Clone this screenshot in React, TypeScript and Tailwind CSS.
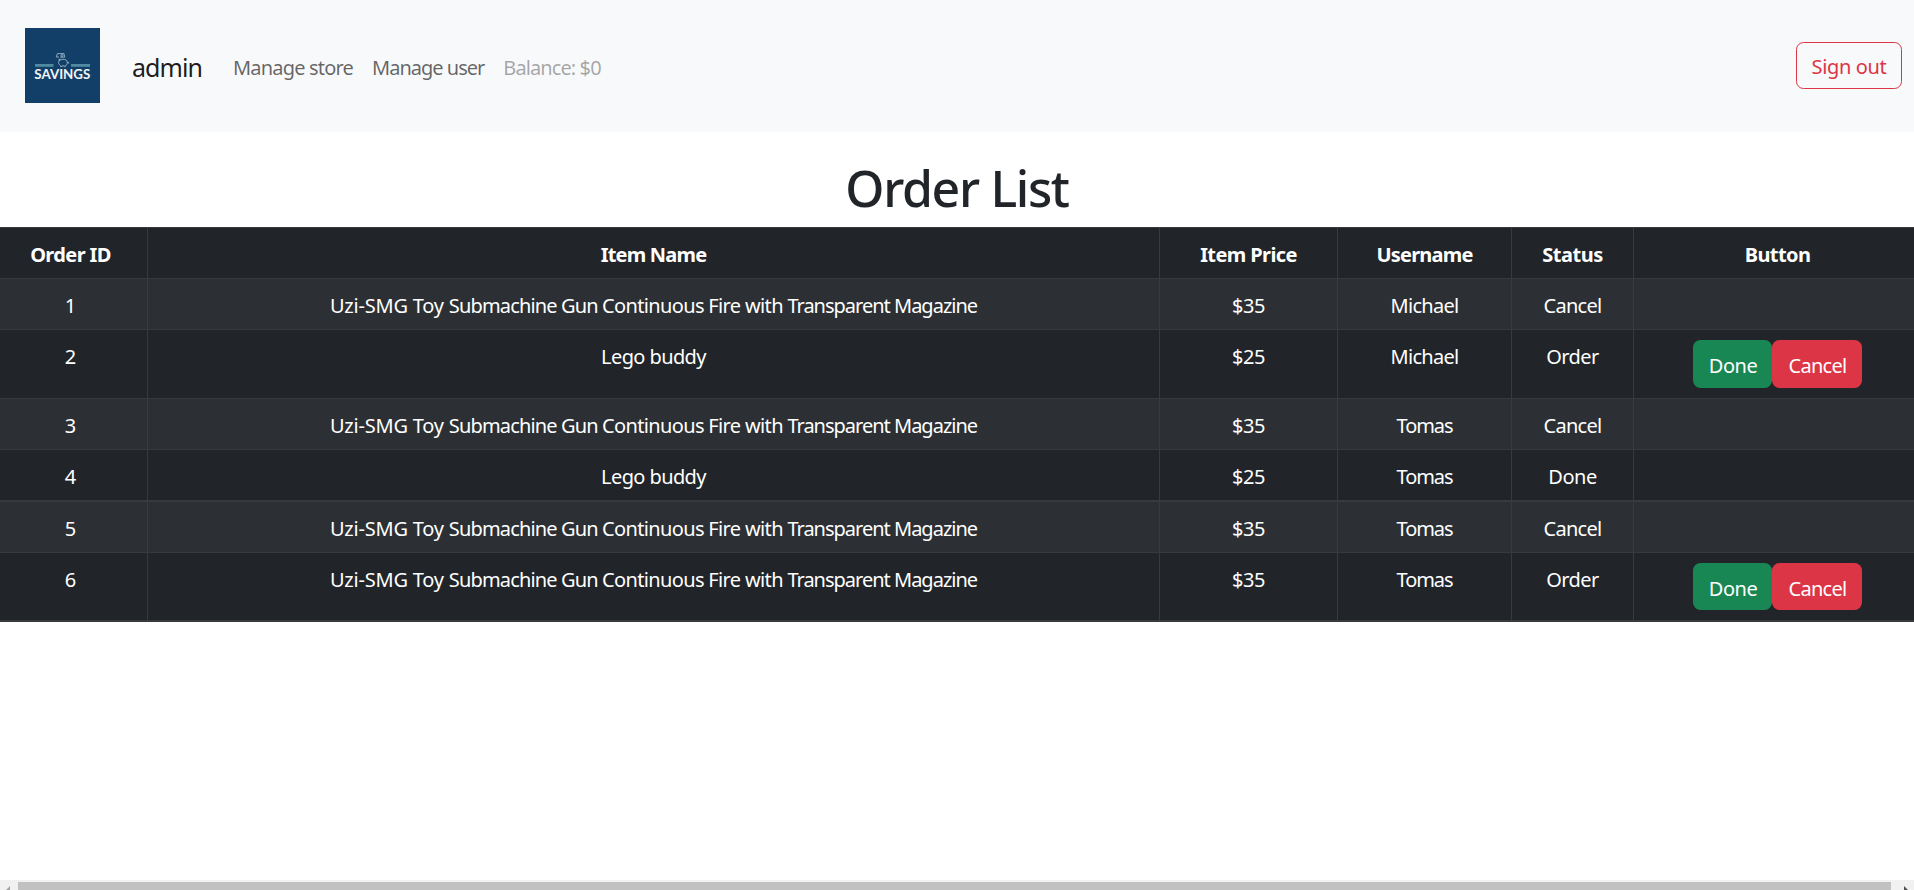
type Order = { id: number; item: string; price: string; user: string; status: string; height: string; action?: string };

const UZI = "Uzi-SMG Toy Submachine Gun Continuous Fire with Transparent Magazine";

const orders: Order[] = [
  { id: 1, item: UZI, price: "$35", user: "Michael", status: "Cancel", height: "h-[51px] border-b" },
  { id: 2, item: "Lego buddy", price: "$25", user: "Michael", status: "Order", height: "h-[69px] border-b", action: "h-12 pt-[3px]" },
  { id: 3, item: UZI, price: "$35", user: "Tomas", status: "Cancel", height: "h-[51px] border-b" },
  { id: 4, item: "Lego buddy", price: "$25", user: "Tomas", status: "Done", height: "h-[52px] border-b-2" },
  { id: 5, item: UZI, price: "$35", user: "Tomas", status: "Cancel", height: "h-[51px] border-b" },
  { id: 6, item: UZI, price: "$35", user: "Tomas", status: "Order", height: "h-[69px] border-b-2", action: "h-[47px] pt-1" },
];

const headers: [string, string][] = [
  ["Order ID", "tracking-[-0.6px]"],
  ["Item Name", "tracking-[-0.8px]"],
  ["Item Price", "tracking-[-0.6px]"],
  ["Username", "tracking-[-0.8px]"],
  ["Status", "tracking-[-0.5px]"],
  ["Button", "tracking-[-0.6px]"],
];

const tracking: Record<string, string> = {
  "Lego buddy": "tracking-[-0.6px]",
  Michael: "tracking-[-0.7px]",
  Tomas: "tracking-[-1.1px]",
  Cancel: "tracking-[-0.75px]",
  Order: "tracking-[-0.6px]",
  Done: "tracking-[-0.5px]",
  $35: "tracking-[-0.4px]",
  $25: "tracking-[-0.4px]",
};

const row =
  "grid grid-cols-[154px_1012px_178px_174px_122px_287px] divide-x divide-[#373b3e] border-[#373b3e] text-center text-white";

function Cell({ text }: { text: string }) {
  if (text === UZI) {
    return (
      <div className="pt-3">
        <span className="tracking-[-0.2px]">Uzi-SMG Toy </span>
        <span className="tracking-[-0.85px]">Submachine Gun </span>
        <span className="tracking-[-0.65px]">Continuous Fire with </span>
        <span className="tracking-[-1px]">Transparent Magazine</span>
      </div>
    );
  }
  return <div className={`pt-3 ${tracking[text] ?? ""}`}>{text}</div>;
}

function Logo() {
  return (
    <svg width="75" height="75" viewBox="0 0 75 75" className="shrink-0">
      <rect width="75" height="75" fill="#123f67" />
      <rect x="10" y="36" width="18.5" height="2.8" fill="#4f8aa0" />
      <rect x="46" y="36" width="19" height="2.8" fill="#4f8aa0" />
      <g fill="none" stroke="#a9c3d1" strokeWidth="0.8">
        <path d="M32.5 25.6H39l.7 3.6h-4.5M34 29H31.2l1.3-3.4" />
        <circle cx="37" cy="27.5" r="1" />
        <path d="M35.5 37.6c-1.3-1-1.9-2-1.9-3.1 0-2.2 2-3.2 4.4-3.2s4.3 1 4.3 3.2c0 1.3-.6 2.3-1.6 3v.9h-1.4v-.6h-2.2v.6h-1.6z" />
        <path d="M42.3 34.4h1.4v1.2M35.3 31.8l-1.2-.9v1.9" />
      </g>
      <text
        x="37.3"
        y="51"
        textAnchor="middle"
        textLength="56"
        lengthAdjust="spacingAndGlyphs"
        fill="#f2f6f8"
        className="font-['Lato'] text-[14px] font-bold"
      >
        SAVINGS
      </text>
    </svg>
  );
}

export default function App() {
  return (
    <div className="flex h-[890px] flex-col overflow-hidden bg-white font-['Noto_Sans',sans-serif] text-xl leading-[30px] text-[#212529]">
      <nav className="flex h-[132px] shrink-0 items-center bg-[#f8f9fa] pr-3 pb-px pl-[25px]">
        <Logo />
        <span className="ml-8 pt-[2px] text-[25px] tracking-[-0.95px] text-black/90">admin</span>
        <a className="ml-[31px] pt-1 tracking-[-0.8px] text-black/60">Manage store</a>
        <a className="ml-[19px] pt-1 tracking-[-1px] text-black/60">Manage user</a>
        <a className="ml-[19px] pt-1 tracking-[-0.9px] text-black/35">Balance: $0</a>
        <button className="ml-auto h-[47px] w-[106px] rounded-[7.5px] border border-[#dc3545] pt-[3px] tracking-[-0.35px] text-[#dc3545]">
          Sign out
        </button>
      </nav>

      <h1 className="mt-[26px] h-[69px] shrink-0 text-center text-[50px] leading-[60px] font-medium tracking-[-1.35px]">
        Order List
      </h1>

      <div className="ml-[-6px] w-[1927px]">
        <div className={`${row} h-[52px] border-y bg-[#212529] font-bold`}>
          {headers.map(([label, cls]) => (
            <div key={label} className={`pt-3 ${cls}`}>
              {label}
            </div>
          ))}
        </div>
        {orders.map((o) => (
          <div key={o.id} className={`${row} ${o.height} ${o.id % 2 ? "bg-[#2c3034]" : "bg-[#212529]"}`}>
            <Cell text={String(o.id)} />
            <Cell text={o.item} />
            <Cell text={o.price} />
            <Cell text={o.user} />
            <Cell text={o.status} />
            <div className="flex items-start justify-center pt-2.5">
              {o.action && (
                <>
                  <button className={`${o.action} w-[79px] rounded-[7.5px] bg-[#198754] pl-px tracking-[-0.5px]`}>Done</button>
                  <button className={`${o.action} w-[90px] rounded-[7.5px] bg-[#dc3545] pl-px tracking-[-0.75px]`}>Cancel</button>
                </>
              )}
            </div>
          </div>
        ))}
      </div>

      <div className="mt-auto flex h-2.5 shrink-0 items-end justify-between bg-[#f1f1f1]">
        <svg width="18" height="8" viewBox="0 0 18 8">
          <path d="M10 4v4H6z" fill="#a3a3a3" />
        </svg>
        <div className="h-2 flex-1 bg-[#c1c1c1]" />
        <svg width="23" height="8" viewBox="0 0 23 8">
          <path d="M13 4v4h4z" fill="#505050" />
        </svg>
      </div>
    </div>
  );
}
